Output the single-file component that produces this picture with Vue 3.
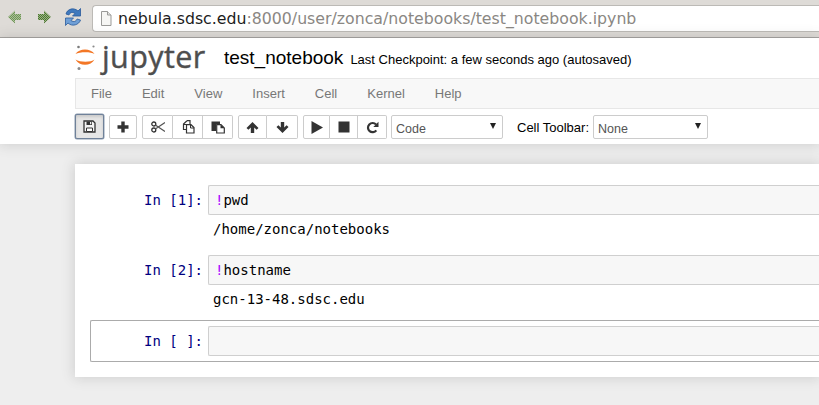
<template>
  <div class="page">
    <div class="chrome">
      <svg class="nav" width="92" height="30" viewBox="0 0 92 30">
        <defs>
          <pattern id="dotA" width="2" height="2" patternUnits="userSpaceOnUse"><rect width="2" height="2" fill="#a9c196"/><rect width="1" height="1" fill="#6f9458"/><rect x="1" y="1" width="1" height="1" fill="#6f9458"/></pattern>
          <pattern id="dotB" width="2" height="2" patternUnits="userSpaceOnUse"><rect width="2" height="2" fill="#98b581"/><rect width="1" height="1" fill="#4d7433"/><rect x="1" y="1" width="1" height="1" fill="#4d7433"/></pattern>
        </defs>
        <path d="M8 15 L15 8.500 V12 H21 V18 H15 V21.500 Z" fill="url(#dotA)"/>
        <path d="M51 15 L44 8.500 V12 H38 V18 H44 V21.500 Z" fill="url(#dotB)"/>
        <path d="M66 12 C67 7 74 5 78 9 L80.500 6.500 V14 H72.500 L75 11.500 C72 9.500 70 10.500 69 13 Z" fill="#3f79bd" stroke="#2a5a9c" stroke-width=".8"/>
        <path d="M80.500 18 C79 23 72 25 68 21 L65.500 23.500 V16 H73.500 L71 18.500 C74 20.500 76 19.500 77 17 Z" fill="#6f9fd6" stroke="#2a5a9c" stroke-width=".8"/>
      </svg>
      <div class="url">
        <svg width="12" height="15" viewBox="0 0 12 15" class="doc">
          <path d="M1.500 .5 H7.500 L11 4 V14.500 H1.500 Z" fill="#f6f6f4" stroke="#9a9a98"/>
          <path d="M7.500 .5 V4 H11" fill="#e2e2e0" stroke="#9a9a98"/>
        </svg>
        <span class="host">nebula.sdsc.edu</span><span class="path">:8000/user/zonca/notebooks/test_notebook.ipynb</span>
      </div>
    </div>

    <header class="head">
      <div class="brand">
        <svg class="logo" width="24" height="28" viewBox="0 0 24 28">
          <circle cx="3.500" cy="3" r="1.300" fill="#7b7b7b"/>
          <circle cx="18.500" cy="2.500" r="1.100" fill="#8a8a8a"/>
          <circle cx="4" cy="24.500" r="1.500" fill="#8a8a8a"/>
          <path d="M.5 10 C4 4 16 4 19.500 10 C16 7.500 5 7.500 .5 10 Z" fill="#f37726"/>
          <path d="M.5 15.500 C4 22.500 16 22.500 19.500 15.500 C16 18.500 5 18.500 .5 15.500 Z" fill="#f37726"/>
        </svg>
        <span class="wordmark">jupyter</span>
        <span class="title">test_notebook</span>
        <span class="ckpt">Last Checkpoint: a few seconds ago (autosaved)</span>
      </div>
      <nav class="menu">
        <span v-for="m in menus" :key="m">{{ m }}</span>
      </nav>
      <div class="tools">
        <div class="group"><button class="btn save">
          <svg width="13" height="13" viewBox="0 0 13 13"><path d="M1 1 H10 L12 3 V12 H1 Z" fill="#f4f4f4" stroke="#333" stroke-width="1.300"/><path d="M3.500 1.500 H9 V5 H3.500 Z" fill="#333"/><path d="M7 2 H8.300 V4.300 H7 Z" fill="#eee"/><path d="M3.500 8 H9.500 V11.500 H3.500 Z" fill="#fff" stroke="#333"/></svg>
        </button></div>
        <div class="group"><button class="btn b28">
          <svg width="12" height="12" viewBox="0 0 12 12"><path d="M4.300 .5 H7.700 V4.300 H11.500 V7.700 H7.700 V11.500 H4.300 V7.700 H.5 V4.300 H4.300 Z" fill="#333"/></svg>
        </button></div>
        <div class="group">
          <button class="btn b31">
            <svg width="14" height="12" viewBox="0 0 14 12"><circle cx="2.800" cy="3" r="2" fill="none" stroke="#333" stroke-width="1.300"/><circle cx="2.800" cy="9" r="2" fill="none" stroke="#333" stroke-width="1.300"/><path d="M4.300 4 L14 10.500 M4.300 8 L14 1.500" stroke="#555" stroke-width="1.200"/></svg>
          </button>
          <button class="btn b30">
            <svg width="14" height="14" viewBox="0 0 14 14"><path d="M6 .7 H9 V4 M6 .7 L2.500 4 V9.500 H5.500 M2.500 4.500 H6" fill="none" stroke="#333" stroke-width="1.200"/><path d="M5.500 4.700 H10 L13 7.500 V13 H5.500 Z" fill="#fff" stroke="#333" stroke-width="1.200"/><path d="M9.500 5 V8 H13" fill="none" stroke="#333"/></svg>
          </button>
          <button class="btn b30">
            <svg width="14" height="14" viewBox="0 0 14 14"><path d="M.5 1.500 H9 V4 H5 V11 H.5 Z" fill="#333"/><path d="M5.700 4.700 H10 L13.300 8 V13 H5.700 Z" fill="#fff" stroke="#333" stroke-width="1.200"/><path d="M9.500 4.500 V8.300 H13.500 Z" fill="#333"/></svg>
          </button>
        </div>
        <div class="group">
          <button class="btn b29">
            <svg width="13" height="13" viewBox="0 0 13 13"><path d="M6.500 1 L12.500 7 L10.600 8.800 L8.200 6.400 V12 H4.800 V6.400 L2.400 8.800 L.5 7 Z" fill="#333"/></svg>
          </button>
          <button class="btn b31">
            <svg width="13" height="13" viewBox="0 0 13 13"><path d="M6.500 12 L12.500 6 L10.600 4.200 L8.200 6.600 V1 H4.800 V6.600 L2.400 4.200 L.5 6 Z" fill="#333"/></svg>
          </button>
        </div>
        <div class="group">
          <button class="btn b27">
            <svg width="12" height="13" viewBox="0 0 12 13"><path d="M.5 0 L12 6.500 L.5 13 Z" fill="#333"/></svg>
          </button>
          <button class="btn b28">
            <svg width="12" height="12" viewBox="0 0 12 12"><rect x=".5" y=".5" width="11" height="11" fill="#333"/></svg>
          </button>
          <button class="btn b29">
            <svg width="13" height="13" viewBox="0 0 13 13"><path d="M10.300 9.300 A4.600 4.600 0 1 1 10 3.500" fill="none" stroke="#333" stroke-width="2.200"/><path d="M12.500 .8 V6 H7.300 Z" fill="#333"/></svg>
          </button>
        </div>
        <div class="select type">Code<i></i></div>
        <span class="ctlabel">Cell Toolbar:</span>
        <div class="select none">None<i></i></div>
      </div>
    </header>

    <main class="notebook">
      <div v-for="c in cells" :key="c.prompt" class="cell" :class="{ selected: c.selected }">
        <div class="inrow">
          <div class="prompt">{{ c.prompt }}</div>
          <div class="code"><b v-if="c.bang">!</b>{{ c.code }}</div>
        </div>
        <div v-if="c.out" class="out">{{ c.out }}</div>
      </div>
    </main>
  </div>
</template>

<script setup>
const menus = ['File', 'Edit', 'View', 'Insert', 'Cell', 'Kernel', 'Help']
const cells = [
  { prompt: 'In [1]:', bang: true, code: 'pwd', out: '/home/zonca/notebooks' },
  { prompt: 'In [2]:', bang: true, code: 'hostname', out: 'gcn-13-48.sdsc.edu' },
  { prompt: 'In [ ]:', bang: false, code: '', selected: true }
]
</script>

<style>
html, body { margin: 0; overflow: hidden; background: #eee; }
</style>

<style scoped>
.page { width: 819px; height: 405px; overflow: hidden; background: #eee; font-family: "Liberation Sans", Arial, sans-serif; }
.chrome { box-sizing: border-box; background: #dedbd7; border-bottom: 1px solid #a5a3a0; display: flex; align-items: flex-start; height: 38px; }
.nav { margin: 2px 0 0 0; flex: none; }
.url { flex: 1; margin-top: 5px; height: 27px; box-sizing: border-box; background: #fff; border: 1px solid #bcbab6; border-right: 0; border-radius: 4px 0 0 4px; display: flex; align-items: center; padding-left: 7px; font-family: "DejaVu Sans", sans-serif; font-size: 15.750px; white-space: nowrap; }
.doc { margin-right: 6px; flex: none; }
.host { color: #1c1c1c; }
.path { color: #8a8783; }
.head { background: #fff; height: 106px; box-sizing: border-box; padding-left: 75px; box-shadow: 0 0 12px 1px rgba(87,87,87,.2); position: relative; }
.brand { height: 40px; display: flex; align-items: center; position: relative; }
.logo { flex: none; margin-right: 3px; }
.wordmark { font-family: "Open Sans", sans-serif; font-size: 30.500px; color: #4e4e4e; line-height: 40px; width: 122px; letter-spacing: .4px; position: relative; top: -2px; -webkit-text-stroke: .4px #4e4e4e; }
.title { font-size: 19px; color: #000; margin-right: 7px; }
.ckpt { font-size: 13px; color: #000; position: relative; top: 1px; }
.menu { height: 31px; box-sizing: border-box; background: #f8f8f8; border: 1px solid #e7e7e7; border-right: 0; display: flex; align-items: center; padding-left: 15px; font-size: 13px; color: #777; gap: 30px; }
.tools { display: flex; align-items: flex-start; margin-top: 6px; }
.group { display: flex; margin-right: 5px; }
.btn { height: 24px; padding: 0; background: #fff; border: 1px solid #ccc; border-left-width: 0; display: flex; align-items: center; justify-content: center; box-sizing: border-box; }
.group .btn:first-child { border-left-width: 1px; border-radius: 2px 0 0 2px; }
.group .btn:last-child { border-radius: 0 2px 2px 0; }
.group .btn:only-child { border-radius: 2px; }
.save { width: 29px; height: 25px; margin-top: -1px; background: #e6e6e6; border: 1px solid #6f8199 !important; box-shadow: inset 0 2px 3px rgba(0,0,0,.12), 0 0 0 .5px #8c9bb0; }
.b27 { width: 27px; }
.b28 { width: 28px; }
.b29 { width: 29px; }
.b30 { width: 30px; }
.b31 { width: 31px; }
.select { height: 24px; box-sizing: border-box; background: #fff; border: 1px solid #ccc; border-radius: 2px; font-size: 12.500px; color: #555; padding: 4px 4px 0 4px; position: relative; line-height: 18px; }
.select i { position: absolute; right: 6px; top: 7px; width: 0; height: 0; border-left: 3.500px solid transparent; border-right: 3.500px solid transparent; border-top: 6px solid #222; }
.type { width: 112px; margin-left: -1px; }
.ctlabel { font-size: 13px; color: #000; margin: 5px 4px 0 14px; }
.none { width: 115px; }
.notebook { margin: 20px 0 0 75px; height: 213px; box-sizing: border-box; background: #fff; box-shadow: 0 0 12px 1px rgba(87,87,87,.2); padding: 15px 0 0 15px; }
.cell { padding: 5px 0; border: 1px solid transparent; border-right: 0; border-radius: 2px 0 0 2px; }
.inrow { display: flex; align-items: stretch; }
.prompt { width: 117px; flex: none; padding: 0 5px 0 0; box-sizing: border-box; text-align: right; font: 14px/30px "DejaVu Sans Mono", monospace; color: #000080; white-space: pre; }
.code { flex: 1; height: 30px; box-sizing: border-box; background: #f7f7f7; border: 1px solid #cfcfcf; border-right: 0; border-radius: 2px 0 0 2px; padding-left: 6px; font: 14px/28px "DejaVu Sans Mono", monospace; color: #000; }
.code b { color: #a0f; font-weight: 400; }
.out { margin-left: 117px; padding-left: 5px; height: 28.400px; font: 14px/28.400px "DejaVu Sans Mono", monospace; color: #000; }
.selected { border-color: #ababab; }
</style>
